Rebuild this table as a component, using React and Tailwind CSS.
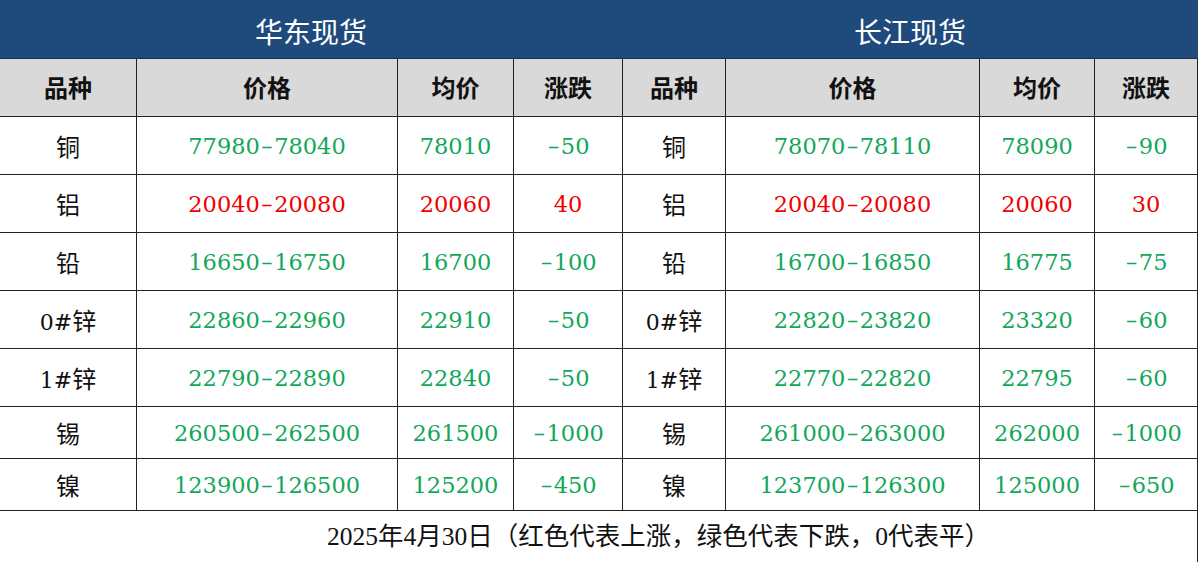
import React from "react";

const GREEN = "text-[#12a85a]";
const RED = "text-[#f00000]";

const east = [
  ["铜", "77980-78040", "78010", "-50"],
  ["铝", "20040-20080", "20060", "40"],
  ["铅", "16650-16750", "16700", "-100"],
  ["0#锌", "22860-22960", "22910", "-50"],
  ["1#锌", "22790-22890", "22840", "-50"],
  ["锡", "260500-262500", "261500", "-1000"],
  ["镍", "123900-126500", "125200", "-450"],
];
const yangtze = [
  ["铜", "78070-78110", "78090", "-90"],
  ["铝", "20040-20080", "20060", "30"],
  ["铅", "16700-16850", "16775", "-75"],
  ["0#锌", "22820-23820", "23320", "-60"],
  ["1#锌", "22770-22820", "22795", "-60"],
  ["锡", "261000-263000", "262000", "-1000"],
  ["镍", "123700-126300", "125000", "-650"],
];

const cjk = { fontFamily: '"Noto Sans CJK SC", sans-serif' };
const num = { fontFamily: '"DejaVu Serif", "Noto Sans CJK SC", serif' };
const foot = { fontFamily: '"Liberation Serif", "Noto Sans CJK SC", serif' };

function Num({ v }) {
  const parts = v.split("-");
  return parts.map((p, i) => (
    <React.Fragment key={i}>
      {i > 0 && <span className="inline-block w-[0.636em] text-center">–</span>}
      {p}
    </React.Fragment>
  ));
}

function NameCell({ name }) {
  const m = name.match(/^([0-9#]*)(.*)$/);
  return (
    <td className="border border-[#222] text-center text-[24px] text-[#111] pt-[2px]">
      {m[1] && (
        <span className="text-[22px]" style={num}>
          {m[1]}
        </span>
      )}
      <span style={cjk}>{m[2]}</span>
    </td>
  );
}

function NumCell({ v, up }) {
  return (
    <td
      className={`border border-[#222] text-center text-[22.5px] pt-[3px] ${up ? RED : GREEN}`}
      style={num}
    >
      <Num v={v} />
    </td>
  );
}

export default function App() {
  const headers = ["品种", "价格", "均价", "涨跌", "品种", "价格", "均价", "涨跌"];
  return (
    <div className="w-[1200px] h-[562px] bg-white overflow-hidden">
      <table className="border-collapse table-fixed w-[1198px] -ml-px">
        <colgroup>
          <col className="w-[137px]" />
          <col className="w-[261px]" />
          <col className="w-[116px]" />
          <col className="w-[109px]" />
          <col className="w-[103px]" />
          <col className="w-[254px]" />
          <col className="w-[115px]" />
          <col className="w-[103px]" />
        </colgroup>
        <tbody>
          <tr className="h-[58px] bg-[#1f4a7c]">
            <td
              colSpan={4}
              className="border-0 border-b border-b-[#1b2f4f] text-center text-white text-[28px] pt-[4px]"
              style={cjk}
            >
              华东现货
            </td>
            <td
              colSpan={4}
              className="border-0 border-b border-b-[#1b2f4f] text-center text-white text-[28px] pt-[4px]"
              style={cjk}
            >
              长江现货
            </td>
          </tr>
          <tr className="h-[58px] bg-[#d9d9d9]">
            {headers.map((h, i) => (
              <td
                key={i}
                className="border border-[#222] text-center text-[24px] font-bold text-[#111]"
                style={cjk}
              >
                {h}
              </td>
            ))}
          </tr>
          {east.map((r, i) => {
            const y = yangtze[i];
            const upE = !r[3].startsWith("-");
            const upY = !y[3].startsWith("-");
            return (
              <tr key={i} className={i < 5 ? "h-[58px]" : "h-[52px]"}>
                <NameCell name={r[0]} />
                <NumCell v={r[1]} up={upE} />
                <NumCell v={r[2]} up={upE} />
                <NumCell v={r[3]} up={upE} />
                <NameCell name={y[0]} />
                <NumCell v={y[1]} up={upY} />
                <NumCell v={y[2]} up={upY} />
                <NumCell v={y[3]} up={upY} />
              </tr>
            );
          })}
          <tr className="h-[52px]">
            <td
              colSpan={8}
              className="border border-[#222] text-center text-[25.5px] text-[#111] pt-[2px] pl-[120px]"
              style={foot}
            >
              2025年4月30日（红色代表上涨，绿色代表下跌，0代表平）
            </td>
          </tr>
        </tbody>
      </table>
    </div>
  );
}
